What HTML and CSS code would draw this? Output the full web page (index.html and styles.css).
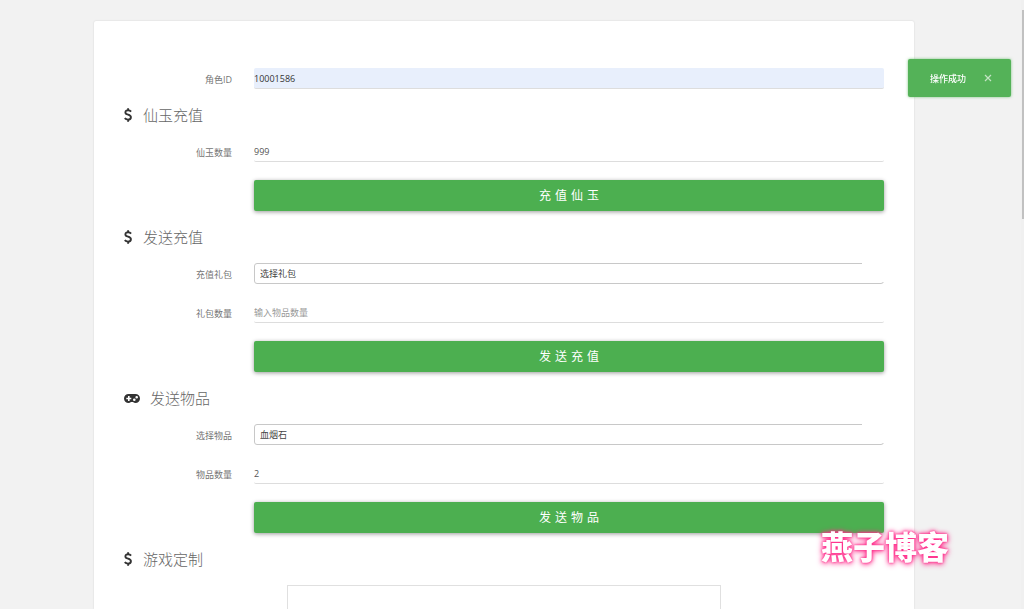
FILE: index.html
```html
<!DOCTYPE html>
<html lang="zh-CN">
<head>
<meta charset="utf-8">
<meta name="viewport" content="width=device-width, initial-scale=1">
<title>充值</title>
<link rel="stylesheet" href="styles.css">
</head>
<body>
<svg class="defs" aria-hidden="true">
  <symbol id="dollar" viewBox="0 0 8 16">
    <path d="M7.1 4.6C6.4 3.8 5.4 3.3 4.2 3.3C2.500 3.300 1.400 4.100 1.400 5.400C1.400 8.400 6.900 7 6.900 10.200C6.900 11.700 5.700 12.600 4 12.600C2.700 12.600 1.500 12.100 .7 11.100M4.100 1.200V3.500M4.100 12.500V14.800" fill="none" stroke="currentColor" stroke-width="1.900"/>
  </symbol>
  <symbol id="gamepad" viewBox="0 0 16 16">
    <path fill="currentColor" fill-rule="evenodd" d="M4.500 4H11.500A4.500 4.500 0 0 1 11.500 13C10.500 13 9.700 12.600 9 12H7C6.300 12.600 5.500 13 4.500 13A4.500 4.500 0 0 1 4.500 4ZM4 6V7.700H2.300V9.300H4V11H5.600V9.300H7.300V7.700H5.600V6ZM10.300 8.400A1.300 1.300 0 1 0 10.300 11A1.300 1.300 0 1 0 10.300 8.400ZM12.700 5.900A1.300 1.300 0 1 0 12.700 8.500A1.300 1.300 0 1 0 12.700 5.900Z"/>
  </symbol>
</svg>

<main class="card">
  <form class="form">
    <div class="row">
      <label class="label" for="role">角色ID</label>
      <input class="field field-filled" id="role" type="text" value="10001586">
    </div>

    <h2 class="heading"><svg class="icon-dollar" aria-hidden="true"><use href="#dollar"/></svg>仙玉充值</h2>
    <div class="group">
      <div class="row">
        <label class="label" for="jade">仙玉数量</label>
        <input class="field" id="jade" type="text" value="999">
      </div>
      <div class="row"><button class="submit" type="button">充值仙玉</button></div>
    </div>

    <h2 class="heading"><svg class="icon-dollar" aria-hidden="true"><use href="#dollar"/></svg>发送充值</h2>
    <div class="group">
      <div class="row">
        <label class="label" for="pack">充值礼包</label>
        <div class="picker"><select class="select" id="pack"><option>选择礼包</option></select></div>
      </div>
      <div class="row">
        <label class="label" for="pack-count">礼包数量</label>
        <input class="field" id="pack-count" type="text" placeholder="输入物品数量">
      </div>
      <div class="row"><button class="submit" type="button">发送充值</button></div>
    </div>

    <h2 class="heading"><svg class="icon-gamepad" aria-hidden="true"><use href="#gamepad"/></svg>发送物品</h2>
    <div class="group">
      <div class="row">
        <label class="label" for="item">选择物品</label>
        <div class="picker"><select class="select" id="item"><option>血烟石</option></select></div>
      </div>
      <div class="row">
        <label class="label" for="item-count">物品数量</label>
        <input class="field" id="item-count" type="text" value="2">
      </div>
      <div class="row"><button class="submit" type="button">发送物品</button></div>
    </div>

    <h2 class="heading"><svg class="icon-dollar" aria-hidden="true"><use href="#dollar"/></svg>游戏定制</h2>
    <div class="panel"></div>
  </form>
</main>

<div class="toast" role="status">
  <span>操作成功</span>
  <button class="toast-close" type="button" aria-label="关闭">
    <svg viewBox="0 0 8 8" aria-hidden="true"><path d="M1 1L7 7M7 1L1 7" stroke="currentColor" stroke-width="1.2" fill="none"/></svg>
  </button>
</div>
<div class="scroll-track" aria-hidden="true"><div class="scroll-thumb"></div></div>
<div class="watermark">燕子博客</div>
</body>
</html>
```

FILE: styles.css
```css
* {
  box-sizing: border-box;
}

body {
  display: flex;
  flex-direction: column;
  margin: 0;
  height: 100vh;
  overflow: hidden;
  padding: 21px 110px 0 94px;
  background: #f2f2f2;
  color: #666;
  font: 9px/19px "Open Sans", "Noto Sans CJK SC", sans-serif;
}

.defs {
  position: absolute;
  width: 0;
  height: 0;
}

.card {
  flex: 1;
  min-height: 0;
  overflow: hidden;
  padding: 47px 30px 0;
  background: #fff;
  border-radius: 2px 2px 0 0;
  box-shadow: 0 0 2px rgba(0, 0, 0, 0.14);
}

.form {
  display: flex;
  flex-direction: column;
  height: 100%;
}

.row {
  display: grid;
  grid-template-columns: 108px 1fr;
  column-gap: 22px;
}

.group {
  display: flex;
  flex-direction: column;
  gap: 18px;
}

.label {
  padding-top: 2px;
  text-align: right;
  color: #757575;
}

.field {
  width: 100%;
  height: 21px;
  padding: 0;
  border: 0;
  border-bottom: 1px solid #ddd;
  border-radius: 2px;
  outline: 0;
  background: transparent;
  color: #555;
  font: inherit;
}

.field-filled {
  background: #e8effc;
  color: #333;
}

.field::placeholder {
  color: #999;
  opacity: 1;
}

.picker {
  position: relative;
}

/* The arrow area is masked, leaving the bottom rule in view. */
.picker::after {
  content: "";
  position: absolute;
  top: 0;
  right: 0;
  width: 22px;
  height: 19px;
  background: #fff;
  pointer-events: none;
}

.select {
  display: block;
  width: 100%;
  height: 21px;
  padding: 0 5px;
  appearance: none;
  border: 1px solid #c8c8c8;
  border-radius: 3px;
  background: #fff;
  color: #444;
  font: inherit;
}

.submit {
  grid-column: 2;
  height: 31px;
  padding: 0;
  border: 0;
  border-radius: 2px;
  background: #4caf50;
  box-shadow: 0 1px 4px rgba(0, 0, 0, 0.4);
  color: #fff;
  font: inherit;
  font-size: 12px;
  letter-spacing: 4px;
  text-indent: 4px;
}

.heading {
  display: flex;
  flex: none;
  align-items: center;
  height: 52px;
  margin: 0;
  color: #666;
  font-size: 15px;
  font-weight: 300;
}

.icon-dollar {
  width: 8px;
  height: 16px;
  margin-right: 11px;
  color: #333;
}

.icon-gamepad {
  width: 16px;
  height: 16px;
  margin-right: 10px;
  color: #333;
}

.panel {
  flex: 1;
  width: 57%;
  margin: 0 auto;
  border: 1px solid #e0e0e0;
  border-bottom: 0;
}

.toast {
  position: fixed;
  top: 59px;
  right: 13px;
  display: flex;
  align-items: center;
  gap: 18px;
  height: 38px;
  padding: 0 19px 0 22px;
  border-radius: 2px;
  background: #54b258;
  box-shadow: 0 0 3px rgba(76, 175, 80, 0.7);
  color: #fff;
  font-weight: 500;
}

.toast-close {
  display: flex;
  padding: 0;
  border: 0;
  background: none;
  color: #c4e4c5;
}

.toast-close svg {
  width: 8px;
  height: 8px;
}

.scroll-track {
  position: fixed;
  top: 0;
  right: 0;
  bottom: 0;
  width: 3px;
  padding-top: 10px;
  background: #f0f0f0;
}

.scroll-thumb {
  width: 2px;
  height: 209px;
  margin-left: 1px;
  background: #c1c1c1;
}

.watermark {
  position: fixed;
  right: 75px;
  bottom: 42px;
  color: #fff;
  font-size: 32px;
  font-weight: 900;
  line-height: 40px;
  text-shadow: 0 0 2px #ff2d8b, 0 0 4px #ff2d8b, 0 1px 6px #ff2d8b;
}
```
